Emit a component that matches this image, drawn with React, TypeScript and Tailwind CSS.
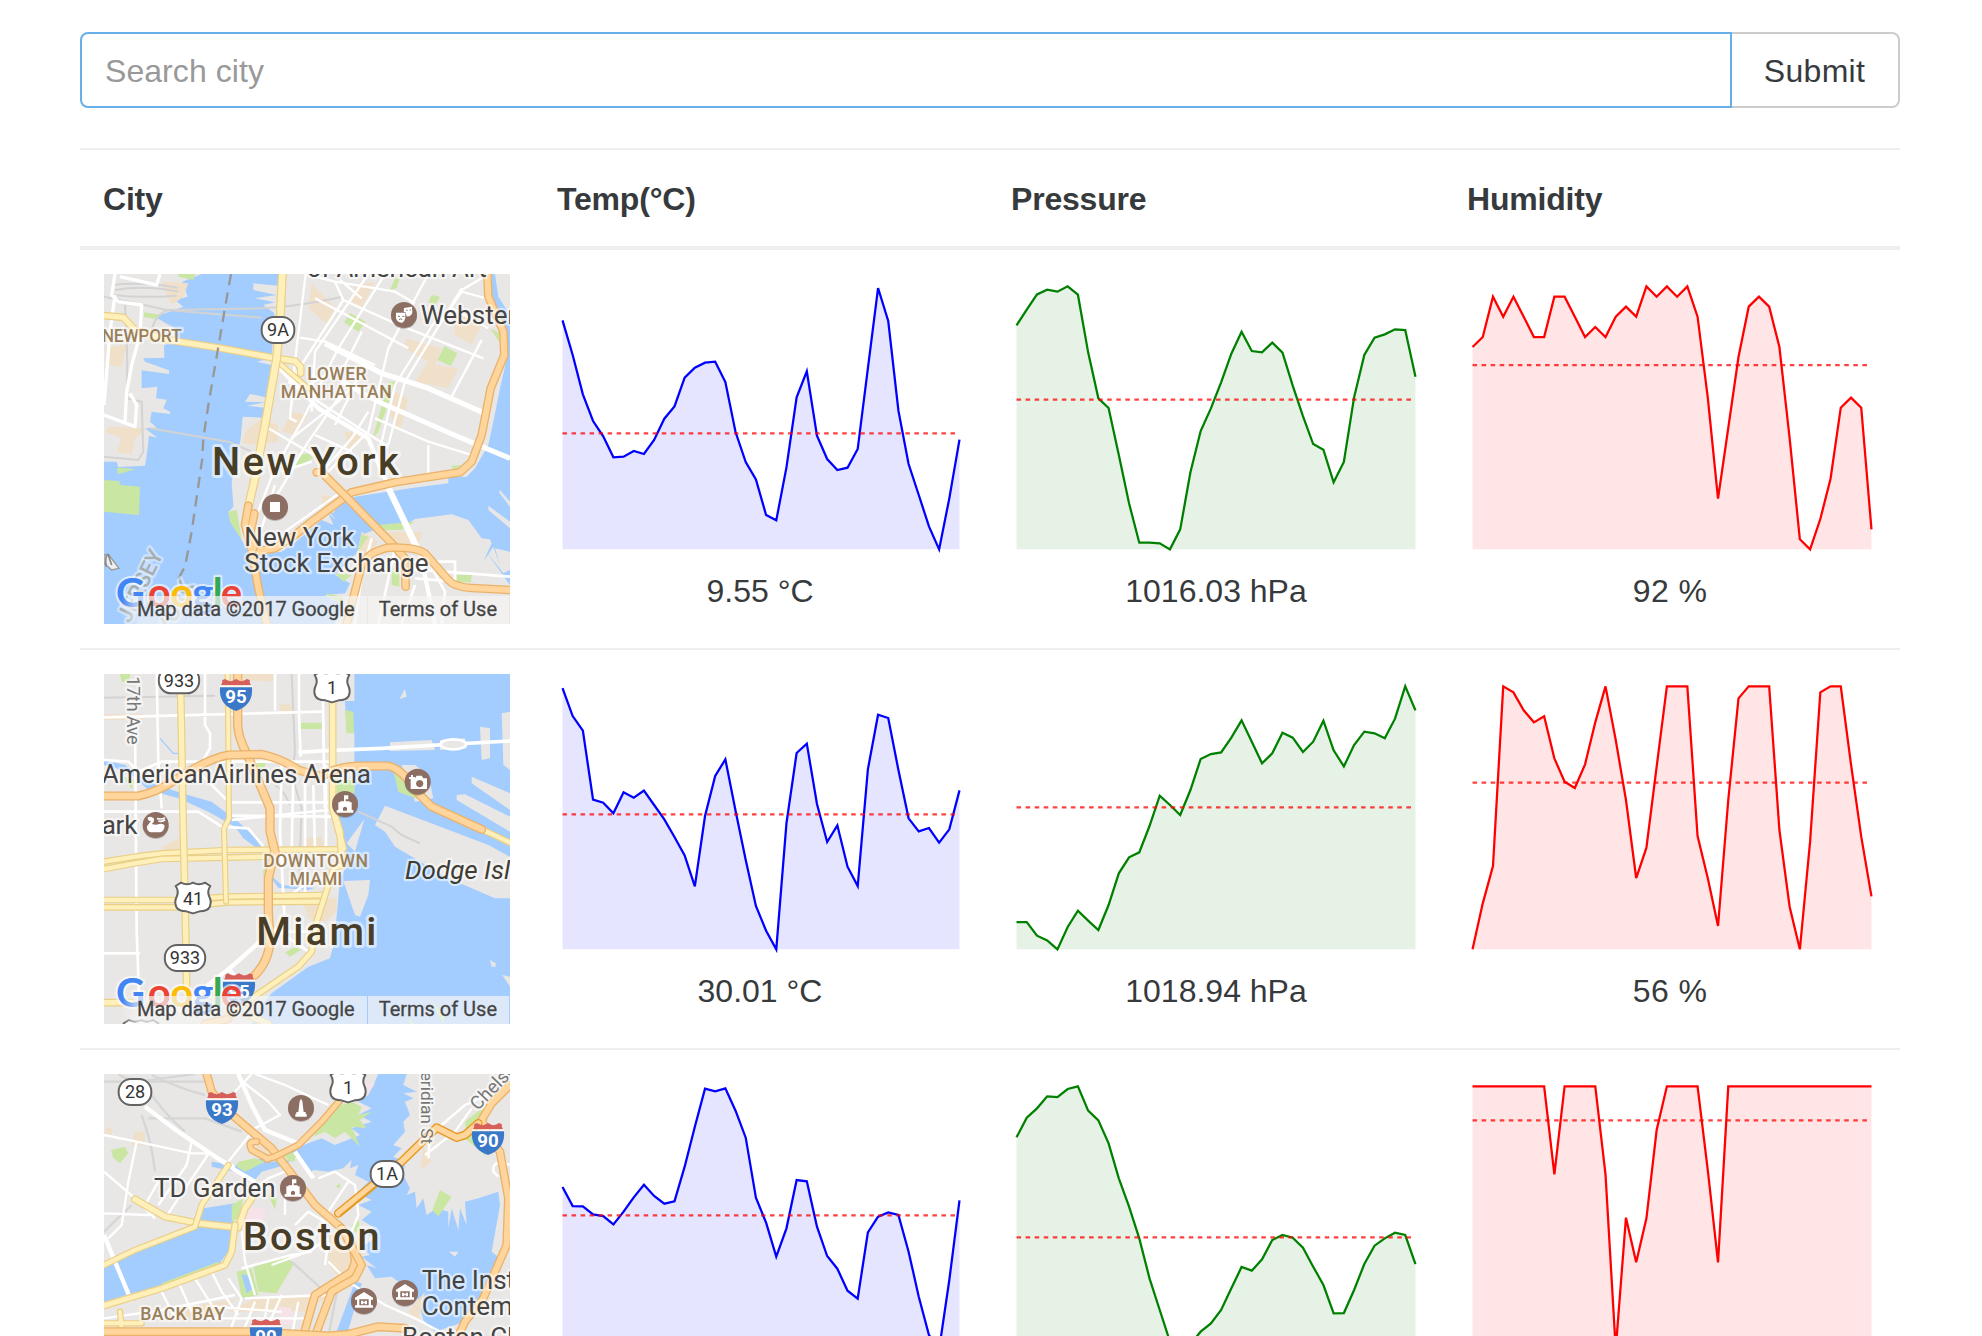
import React from "react";

/* ---------- sparkline chart ---------- */

type ChartProps = {
  values: number[];
  floor: number;
  mean: number;
  color: string;
  width: number;
};

const UNIT = 3;

function Chart({ values, floor, mean, color, width }: ChartProps) {
  const pad = width / 90;
  const base = 280 - 4.65;
  const step = (width - pad * 2) / (values.length - 1);
  const y = (v: number) => base - (floor - v) / UNIT;
  const points = values.map((v, i) => `${(pad + i * step).toFixed(2)},${y(v).toFixed(2)}`).join(" ");
  return (
    <svg width={width} height={280} className="block">
      <polygon points={`${pad},${base} ${points} ${width - pad},${base}`} fill={color} fillOpacity={0.1} />
      <polyline points={points} fill="none" stroke={color} strokeWidth={2.26} />
      <line
        x1={pad}
        x2={width - pad - 0.5}
        y1={y(mean)}
        y2={y(mean)}
        stroke="red"
        strokeOpacity={0.75}
        strokeWidth={2.26}
        strokeDasharray={`${pad} ${pad}`}
      />
    </svg>
  );
}

/* ---------- map building blocks ---------- */

const WATER = "#a3ccff";
const LAND = "#e9e7e5";
const PARK = "#cae6a3";
const BUILT = "#f0e0ca";

function Fill({ c, d }: { c: string; d: string }) {
  return <path d={d} fill={c} />;
}

function Line({ c = "#ffffff", w = 9, d, dash }: { c?: string; w?: number; d: string; dash?: string }) {
  return <path d={d} fill="none" stroke={c} strokeWidth={w} strokeLinejoin="round" strokeDasharray={dash} />;
}

function Arterial({ d, w = 18 }: { d: string; w?: number }) {
  return (
    <g fill="none" strokeLinejoin="round" strokeLinecap="round">
      <path d={d} stroke="#e9cf87" strokeWidth={w + 5} />
      <path d={d} stroke="#ffefb8" strokeWidth={w - 2} />
    </g>
  );
}

function Highway({ d, w = 19, edge = "#eab26a" }: { d: string; w?: number; edge?: string }) {
  return (
    <g fill="none" strokeLinejoin="round" strokeLinecap="round">
      <path d={d} stroke={edge} strokeWidth={w + 7} />
      <path d={d} stroke="#ffd59b" strokeWidth={w - 1} />
    </g>
  );
}

type LabelProps = {
  x: number;
  y: number;
  len?: number;
  size?: number;
  fill?: string;
  weight?: number;
  italic?: boolean;
  rotate?: number;
  halo?: number;
  children: React.ReactNode;
};

function Label({ x, y, len, size = 78, fill = "#444444", weight = 400, italic, rotate, halo = 14, children }: LabelProps) {
  return (
    <text
      x={x - 2}
      y={y}
      textLength={len}
      fontSize={size}
      fontWeight={weight}
      fontStyle={italic ? "italic" : undefined}
      fill={fill}
      stroke="#ffffff"
      strokeOpacity={0.55}
      strokeWidth={halo}
      strokeLinejoin="round"
      paintOrder="stroke"
      transform={rotate ? `rotate(${rotate} ${x} ${y})` : undefined}
    >
      {children}
    </text>
  );
}

function Area(props: LabelProps) {
  return <Label size={53} weight={500} fill="#997f5a" {...props} />;
}

function CityName(props: LabelProps) {
  return <Label size={119} weight={500} fill="#483d26" halo={18} {...props} />;
}

function StateRoute({ x, y, w = 98, children }: { x: number; y: number; w?: number; children: string }) {
  return (
    <g>
      <rect x={x - w / 2} y={y - 39} width={w} height={78} rx={37} fill="#fff" stroke="#636363" strokeWidth={6} />
      <text x={x} y={y + 19} textAnchor="middle" fontSize={54} fill="#333">
        {children}
      </text>
    </g>
  );
}

function UsRoute({ x, y, children }: { x: number; y: number; children: string }) {
  return (
    <g transform={`translate(${x} ${y})`}>
      <path
        d="M-52 13L-36 3Q-18 13 0 3Q18 13 36 3L52 13Q42 28 48 43Q57 60 50 76Q44 88 20 89L0 95L-20 89Q-44 88 -50 76Q-57 60 -48 43Q-42 28 -52 13Z"
        fill="#fff"
        stroke="#636363"
        strokeWidth={6}
        strokeLinejoin="round"
      />
      <text y={70} textAnchor="middle" fontSize={54} fill="#333">
        {children}
      </text>
    </g>
  );
}

function Interstate({ x, y, children }: { x: number; y: number; children: string }) {
  return (
    <g transform={`translate(${x} ${y})`}>
      <path d="M-45 19Q-39 8 -42 4L-33 0Q-22 8 -12 6L0 0L12 6Q22 8 33 0L42 4Q39 8 45 19Z" fill="#d65f5b" />
      <path d="M-48 19H48V26H-48Z" fill="#fff" fillOpacity={0.85} />
      <path d="M-48 25H48Q52 72 12 91L0 96L-12 91Q-52 72 -48 25Z" fill="#3a78c9" />
      <text y={73} textAnchor="middle" fontSize={56} fontWeight={700} fill="#fff">
        {children}
      </text>
    </g>
  );
}

function Poi({ x, y, children }: { x: number; y: number; children: React.ReactNode }) {
  return (
    <g transform={`translate(${x} ${y})`}>
      <circle r={39} cy={3} fill="#000" fillOpacity={0.2} />
      <circle r={39} fill="#8d6e63" />
      {children}
    </g>
  );
}

const arenaIcon = (
  <path
    fill="#fff"
    fillRule="evenodd"
    d="M-3 -26H10V-14H2V-8H14V2H20V18H25V26H-25V18H-20V2H-14V-8H-3ZM-20 -5H-14V2H-20ZM14 -5H20V2H14ZM-6 20H6V12Q0 4 -6 12Z"
  />
);

const museumIcon = (
  <path
    fill="#fff"
    fillRule="evenodd"
    d="M0 -27L27 -10V-4H21V13H27V20H-27V13H-21V-4H-27V-10ZM-14 -5V13H14V-5ZM-9 -1H-2V3H2V-1H9V10H2V6H-2V10H-9Z"
  />
);

function GoogleMark() {
  const letters: [string, number, string][] = [
    ["G", 63, "#4285f4"],
    ["o", 158, "#ea4335"],
    ["o", 226, "#fbbc05"],
    ["g", 292, "#4285f4"],
    ["l", 353, "#34a853"],
    ["e", 377, "#ea4335"],
  ];
  return (
    <g
      fontSize={120}
      fontWeight={700}
      stroke="#ffffff"
      strokeOpacity={0.6}
      strokeWidth={13}
      strokeLinejoin="round"
      paintOrder="stroke"
      style={{ fontFamily: "Lato, sans-serif" }}
    >
      {letters.map(([ch, x, c], i) => (
        <text key={i} x={x} y={1027} fill={c}>
          {ch}
        </text>
      ))}
    </g>
  );
}

function MapFrame({ land, children }: { land: string; children: React.ReactNode }) {
  return (
    <svg
      width={406}
      height={350}
      viewBox="27 27 1218 1050"
      className="block"
      style={{ fontFamily: "Roboto, sans-serif" }}
    >
      <defs>
        <linearGradient id="credit" x1="0" x2="1">
          <stop offset="0" stopColor="#f5f5f5" stopOpacity="0" />
          <stop offset="0.07" stopColor="#f5f5f5" stopOpacity="0.7" />
          <stop offset="1" stopColor="#f5f5f5" stopOpacity="0.7" />
        </linearGradient>
      </defs>
      <rect x={27} y={27} width={1218} height={1050} fill={land} />
      {children}
      <GoogleMark />
      <rect x={80} y={993} width={736} height={84} fill="url(#credit)" />
      <rect x={819} y={993} width={423} height={84} fill="#f5f5f5" fillOpacity={0.7} />
      <g fontSize={60} fill="#444" stroke="#444" strokeWidth={0.8}>
        <text x={126} y={1052} textLength={653}>
          Map data ©2017 Google
        </text>
        <text x={851} y={1052} textLength={355}>
          Terms of Use
        </text>
      </g>
    </svg>
  );
}

/* ---------- maps ---------- */

function NewYorkMap() {
  return (
    <MapFrame land={WATER}>
      <Fill
        c={LAND}
        d="M27 27H320L262 50L278 95L240 105L265 125L180 155L205 170L240 190L235 235L207 240L208 278L145 280L150 290L222 316V327L140 316V370L187 365L183 400L215 404L205 430L225 440V447L170 440L165 470L185 488L150 490L187 518L162 512L158 550L150 602L70 606L65 590H27Z"
      />
      <Fill
        c={LAND}
        d="M560 27H1180L1190 120L1225 210L1238 270L1215 370L1195 470L1180 540L1140 610L1115 635H1060V655L945 670L780 695L700 735L722 765L700 745L715 780L680 765L640 800L590 840L560 860L500 868L455 850L440 825L405 760L400 742L415 725L410 650L430 560L437 520L443 455L505 458L508 428L457 422L512 412L450 410L465 387L518 398L530 300L485 290L530 280L538 145L505 120L540 112L480 100L545 90L475 75V55L550 62Z"
      />
      <Fill c={LAND} d="M1200 27H1245V150L1210 95Z" />
      <Fill
        c={LAND}
        d="M1245 830L1160 820L1120 765L1070 748L960 762L940 775L850 790L800 810L785 865L720 930L765 955L750 985L690 990L742 1020L720 1077H1245V960L1170 855L1225 925L1245 915Z"
      />
      <Fill c={WATER} d="M1200 790L1245 800V860L1200 850L1215 900L1195 845L1165 890L1190 835L1175 800Z" />
      <Fill c={LAND} d="M1215 675L1245 710V725L1212 682ZM1180 722L1245 770V790L1180 735Z" />
      <Fill
        c={BUILT}
        d="M32 245L95 240L80 305L35 300ZM40 485L155 490L120 520L110 570L65 560L80 520L30 500ZM205 50L280 55L265 95L230 120L200 60ZM450 500L500 460L550 480V530L480 540L445 535ZM650 55L720 130L700 180L640 130ZM780 60L840 50L800 130L770 110ZM930 220L1040 250L1020 300L1090 310L1060 370L960 350L1000 290L930 250ZM1070 130L1160 180L1130 240L1080 210ZM590 440L640 450L600 510L560 500ZM750 500L820 510L760 560ZM900 380L940 400L915 500L885 450ZM680 690L740 700L715 745L680 720ZM850 800L980 800L970 850H880ZM800 800L850 830L800 890L790 850Z"
      />
      <Fill
        c={PARK}
        d="M250 27H300L295 45L250 35ZM147 142L200 150L185 162L147 156ZM27 645L73 648L75 660L135 665L132 750L27 740ZM66 608L120 612L70 628ZM765 143L812 170L790 200L747 172ZM1048 243L1087 265L1068 303L1027 285ZM1010 90L1035 95L1020 120L1000 112ZM880 350H903L850 500L833 520ZM600 608L615 570L640 565L655 580ZM400 740L425 735L440 825L405 770ZM845 780L960 770L920 795L845 795ZM890 920H913V965L890 960ZM1085 930H1130L1128 952H1085ZM800 810L820 815L785 865ZM720 925L770 930L745 950ZM690 985L745 995L740 1020ZM900 40H915L905 70L885 75ZM1070 602L1100 600L1075 620ZM1185 190L1215 205L1212 230Z"
      />
      <Line c="#d3d3d3" w={6} d="M27 95Q150 120 215 135L500 158M215 135L500 130Q640 120 740 95M165 490L400 530L470 560M60 75Q150 60 250 80M50 60Q150 50 248 68M55 90Q140 100 245 92M90 120Q100 280 95 400L140 410L145 560L130 585L27 575M220 135Q170 150 165 230" />
      <g>
        <Line w={10} d="M60 27L50 90L70 110L140 120L135 210L110 300L95 380L90 470M27 450L120 485L125 420L105 385M60 90L45 200L27 420M75 35L185 60L195 27" />
        <Line w={7} d="M632 27L600 290L585 460L605 470M720 50L745 105L600 330L590 420M820 27L660 260L650 440M870 27L730 250L620 470L540 610L470 790M1000 27L880 250L820 500L700 620M1050 120L900 360L860 530M1100 70L930 350L880 540M1160 225L1070 395M1190 105L1100 80L1060 140M640 30L720 50L900 80L960 115M660 100L940 250M745 105L900 175L1165 280M1180 190L1070 130M615 218L690 230L840 300M735 45L800 100M1160 40L1100 75M580 350L700 430L880 545M620 370L750 300L800 200" />
        <Line w={16} d="M690 235L860 325L1000 370L1170 445" />
        <Line w={13} d="M545 300L670 430L820 520L860 620L975 860L1020 1077" />
        <Line w={15} d="M740 350L850 410L1090 515L1245 580" />
        <Line w={7} d="M520 490L640 560L700 590M590 520L730 410L800 330M660 510L770 560M770 380L720 480M840 460L1000 530L1130 570M1000 540V630M740 385L640 530L590 610M820 440L770 520L690 610M570 800L740 680M560 620L650 590M540 700L600 600M500 790L540 660" />
        <Line w={8} d="M875 670L960 850M830 820L800 930L780 1077M890 890H1080V950L960 940M900 850L850 1077M920 910L1245 935M1000 890L1050 980L1040 1077M960 960L920 1077" />
      </g>
      <Arterial d="M27 152L85 157L120 195L220 225L380 250L543 280L600 288L617 305V325" />
      <Arterial d="M545 288L640 370" w={13} />
      <Arterial d="M562 27L556 150L545 280L510 480L480 640L460 725" w={22} />
      <Highway d="M1177 27L1180 95L1225 200L1228 270L1187 370L1160 510L1130 590L1095 622L900 652L770 682L650 770L600 810L540 850L480 860" />
      <Highway d="M460 722L450 780L470 855L490 970L515 1077M478 745L467 800L475 850" />
      <Highway d="M665 622L680 622L750 692L890 835L930 880L932 965" />
      <Highway d="M755 1077L800 900Q820 860 880 848Q960 845 990 865L1060 945Q1080 967 1130 969L1245 975" />
      <Line c="#989898" w={7} dash="34 22" d="M408 27L395 100L340 420L325 520L322 580L290 800L270 905L245 950L238 1000" />
      <Label x={637} y={36} len={540}>of American Art</Label>
      <Label x={979} y={178}>Webster</Label>
      <Area x={22} y={232} len={240}>NEWPORT</Area>
      <Area x={639} y={345} len={178}>LOWER</Area>
      <Area x={559} y={399} len={333}>MANHATTAN</Area>
      <g opacity={0.8}>
        <Label x={105} y={1075} size={66} weight={500} fill="#a8a89c" rotate={-64}>JERSEY</Label>
        <Label x={225} y={1110} size={66} weight={500} fill="#a8a89c" rotate={-64}>YORK</Label>
      </g>
      <CityName x={353} y={630} len={560}>New York</CityName>
      <Label x={450} y={842} len={330}>New York</Label>
      <Label x={450} y={920} len={553}>Stock Exchange</Label>
      <StateRoute x={549} y={195}>9A</StateRoute>
      <Poi x={927} y={150}>
        <path fill="#fff" d="M0 -21L24 -25L25 -7Q20 6 8 4L4 -9H-1Z" />
        <path fill="#fff" d="M-24 -7H4V8Q0 24 -9 23Q-23 20 -24 8Z" />
        <path d="M-18 4H-12M-5 4H1M-15 14Q-10 9 -5 14M7 -14H11M17 -15H21" fill="none" stroke="#8d6e63" strokeWidth={3} />
      </Poi>
      <Poi x={540} y={726}>
        <path fill="#fff" d="M-15 -15H15V15H-15Z" />
      </Poi>
      <path d="M27 870L40 868L72 910L50 915L27 895Z" fill="#eee" stroke="#999" strokeWidth={4} />
      <path d="M34 905Q28 870 40 870L50 900" fill="none" stroke="#888" strokeWidth={5} />
    </MapFrame>
  );
}

function MiamiMap() {
  return (
    <MapFrame land={LAND}>
      <Fill
        c={WATER}
        d="M778 27H1245V1077H470L500 1020L530 985L640 905L705 880L718 830L730 700L735 640L757 600L745 500L720 450L778 380V200L755 195L750 108H778Z"
      />
      <Fill c={WATER} d="M27 285L90 300L160 350L260 385L350 410L430 470L510 545H480L445 520L420 485L340 440L250 400L160 375L100 320L27 300ZM515 620L560 660L660 668L640 675L550 668Z" />
      <Line c={WATER} w={4} d="M195 220L235 265H250" />
      <Fill
        c={LAND}
        d="M870 422L1180 540L1245 575V700H1200L1060 640L900 545L870 500L840 480ZM920 300H960L1000 330L1015 400L960 410ZM1130 335L1245 385V435L1130 355ZM1085 390L1110 388L1245 455V500L1085 405ZM885 232L1010 225L1020 255L885 258ZM1035 225L1110 220L1115 250L1035 255ZM1155 185L1185 190V280L1160 285ZM1220 145L1245 140V315L1225 300ZM930 72L935 95L913 102ZM745 648L825 645L820 690L795 755L780 750ZM808 462L780 560L755 535ZM1185 885L1202 895V905H1190ZM1222 930L1245 935V965Z"
      />
      <Fill c={PARK} d="M750 135L775 140L777 205H755ZM617 173H680V192H617ZM895 318L925 330L975 405L910 380ZM75 27H107L100 50H80ZM570 862L600 845L618 855L585 875ZM480 285H510V310H480ZM725 345H778V385H725ZM85 335L118 345L110 372ZM505 610H522V635H505ZM940 1060L960 1077H945ZM1005 1005L1050 1050L1045 1077Z" />
      <Fill c={BUILT} d="M440 27H535V50L450 45ZM555 118H590V145H555ZM27 148H145V165H27ZM200 545L250 520H270V560H210ZM625 520L680 515L690 560H630ZM620 700H725V740L690 770L640 760ZM510 530H550V600H520ZM620 830L690 790L680 850Z" />
      <Line c="#d3d3d3" w={6} d="M790 440L890 485L920 510L975 535M27 98L360 92M590 27L600 260M600 260L590 330L620 430L610 700M540 360Q570 380 585 420" />
      <Line w={8} d="M185 27L190 290L200 430M120 160L125 800L135 1077M27 285L100 290L130 320L200 290H710M27 440H310L380 485L460 490L505 545M330 27V180L345 205V250L310 310M27 157L680 140M540 27V137M612 27V150L617 275M683 27L686 260L690 430M27 865H135M410 412H700M410 465L700 435M410 452L715 455M560 300L555 500L568 750M595 340L590 550M630 350V700M655 360L660 560M693 300V545M575 700L640 650M310 320L400 410M530 800H640M540 790L640 860" />
      <Line w={13} d="M495 830L410 905L340 960L250 1040M400 910L440 960" />
      <Line w={11} d="M610 262L690 257L860 250L1060 238L1245 228" />
      <ellipse cx={1075} cy={238} rx={38} ry={15} fill={LAND} stroke="#fff" strokeWidth={8} />
      <Arterial d="M27 590L120 575L200 565L400 555L740 553" w={15} />
      <Arterial d="M27 612L120 595L200 582L400 578L520 575" w={15} />
      <Arterial d="M27 705H240L400 695L690 690" w={15} />
      <Arterial d="M27 727H240L400 712L680 710" w={15} />
      <Arterial d="M257 80L265 500L270 700L275 960" />
      <Arterial d="M398 27L402 460L387 490L393 710" w={13} />
      <Arterial d="M713 60V430L735 500L742 600M713 430L745 550" />
      <Arterial d="M742 600L715 610L700 660L665 770L650 860L610 905L470 1000L400 1050" w={16} />
      <Arterial d="M27 1013H110" />
      <Arterial d="M470 1055L520 1077" />
      <Arterial d="M1165 495L1245 533" w={15} />
      <Highway d="M428 27V180Q430 220 455 265Q500 370 525 430V500L540 560L520 640V740L525 830Q520 890 480 930" w={21} />
      <Highway d="M27 393H130Q190 380 240 345Q340 280 400 270L500 268Q560 280 610 315L680 335Q720 305 790 303H880Q920 310 965 380L1010 425L1160 493" w={20} />
      <Highway d="M400 1062L330 1077" />
      <Label x={97} y={36} size={54} fill="#777" rotate={90} len={205}>17th Ave</Label>
      <Label x={22} y={353} len={808}>AmericanAirlines Arena</Label>
      <Label x={22} y={507} len={107}>ark</Label>
      <Area x={507} y={606} len={314}>DOWNTOWN</Area>
      <Area x={586} y={661} len={158}>MIAMI</Area>
      <Label x={932} y={642} italic fill="#3f3c32">Dodge Isl</Label>
      <CityName x={486} y={840} len={360}>Miami</CityName>
      <StateRoute x={252} y={46} w={121}>933</StateRoute>
      <StateRoute x={270} y={879} w={121}>933</StateRoute>
      <UsRoute x={711} y={17}>1</UsRoute>
      <UsRoute x={294} y={650}>41</UsRoute>
      <UsRoute x={138} y={1062}>1</UsRoute>
      <Interstate x={423} y={42}>95</Interstate>
      <Interstate x={432} y={925}>95</Interstate>
      <Poi x={968} y={350}>
        <path fill="#fff" fillRule="evenodd" d="M-8 -10L-3 -18H12L17 -10H28V22H-21V-8ZM6 -5A11 11 0 1 0 6.1 -5Z" />
        <path fill="#fff" d="M-20 -20H-14V-14H-8V-8H-14V-2H-20V-8H-26V-14H-20Z" />
      </Poi>
      <Poi x={750} y={417}>{arenaIcon}</Poi>
      <Poi x={182} y={480}>
        <path fill="#fff" d="M-24 -22Q-15 -28 -6 -20Q-2 -10 -12 -3Q2 2 10 -3Q24 -5 27 2Q26 17 14 22H-15Q-28 18 -26 4L-14 -12Q-24 -12 -24 -22Z" />
        <path d="M8 -12Q22 -9 28 -16M4 -19Q20 -16 28 -22" fill="none" stroke="#fff" strokeWidth={5} />
      </Poi>
    </MapFrame>
  );
}

function BostonMap() {
  return (
    <MapFrame land={LAND}>
      <Fill
        c={WATER}
        d="M850 27H935L925 60L965 80L925 85L955 100L930 110L945 150L925 170L930 200L895 240L920 250L895 275L930 290L925 330L945 370L935 390L960 380L965 430L985 400L995 450L1025 430L1060 440L1060 490L1070 430L1090 495L1095 430L1115 480L1110 410L1150 400L1210 380L1215 420L1190 560L1215 580L1190 640L1130 760L1080 780L1020 800L985 765L965 690L890 635L840 640L815 600L845 610L800 575L825 570L800 545L840 520L800 500L840 490L800 465L830 440L790 420L830 405L785 385L820 350L780 330L790 300L765 310L770 285L745 310L700 320L655 315L640 330L610 270L570 300L500 320L480 345L420 320L350 305V290L420 300L470 290L530 270L600 250L680 220L720 240L795 210L770 190L830 170L790 150L830 130L790 110L820 90L835 60Z"
      />
      <Fill c={WATER} d="M27 605L200 530L310 480L325 430L420 415L415 470L400 560L370 600L200 660L27 710ZM780 650L800 655L755 813H720ZM440 625L460 640L475 670L455 685Z" />
      <Fill c={LAND} d="M1090 560L1080 575L1062 560Z" />
      <Fill
        c={PARK}
        d="M690 150L720 125L770 110L800 125L790 150L830 140L795 165L815 190L770 185L795 245L750 200L720 220L690 200L655 215ZM475 605L580 575L595 600L545 685L490 680ZM425 620L470 610L490 690L440 700ZM410 420L445 400L430 460L410 470ZM430 290L480 280L510 290L450 320L425 305ZM540 275L600 262L600 290L560 285ZM48 255L90 245L100 265L75 295L55 280ZM1035 375L1070 395L1030 455L1012 435ZM1110 170L1160 130L1180 180L1200 250L1170 270L1115 225ZM770 480L790 465L795 490L780 505ZM200 655L370 590L375 600L200 675ZM520 390L545 400L540 435ZM70 755L80 790H65ZM720 365L735 355V370Z"
      />
      <Fill c={WATER} d="M440 628L460 632L475 670L455 685Z" />
      <Fill c={BUILT} d="M700 510L790 520L790 620L740 650L700 600ZM985 240L1010 290L975 315ZM480 700L700 690L640 740H400ZM940 740L990 680L970 770ZM460 225L540 250L580 285L530 290ZM230 735L430 700L340 760H220ZM120 200H150V240H110ZM30 190L50 185V210H30ZM1000 200L1020 240H985Z" />
      <Fill c="#f6e3ea" d="M460 425L510 430V465L450 475ZM550 725L590 730V780H560ZM800 60L840 55L820 85Z" />
      <Line c="#d6d6d6" w={7} d="M27 50H330M170 30Q250 70 330 90M140 150Q170 230 180 320M150 60Q200 140 270 200M160 160H330L440 200M70 27Q110 60 200 40L300 27M590 590L700 690M730 660L700 813M27 500L110 420" />
      <Line w={7} d="M27 210L150 235L290 265L345 265L420 305M345 260L210 460M27 320L120 400L180 460M125 230L100 350L80 480L40 520M190 350L150 420M290 230L275 300L190 420M27 445L160 450L200 440M480 27L570 60L700 120M430 40L520 110L555 150L480 190L400 290M470 27L420 80M670 340L720 320L780 360L790 450L770 500M700 440L760 350M570 450V400L600 360M600 480L640 440L690 470M480 370L520 340L570 320M530 600L640 560L700 520M440 500L450 590L480 690M440 610L590 570L650 560M700 590L760 650L870 720L960 760L1060 813M700 530L690 600M450 700L700 690M400 640L440 700L400 813M350 620L380 680L430 750M300 640L350 720M200 680L240 760M250 650L290 740M27 760L200 735L420 690M480 710L440 813M520 700L500 813M560 690L520 780M340 760H650M350 725L560 740M610 710L590 813M990 270L1080 200L1130 130M1000 280L1005 210L1110 120L1180 90M1245 300Q1190 280 1195 320L1210 335" />
      <Line w={13} d="M150 125L250 200L420 315L480 350M430 27L470 120L510 195L620 240M600 260L655 340M27 510L60 590L110 710" />
      <Arterial d="M120 403L210 455L310 475L430 488L450 430L470 400" />
      <Arterial d="M27 600L120 555L300 485L320 420L400 300" w={15} />
      <Arterial d="M27 722L200 670L390 600L410 560L420 480" w={17} />
      <Arterial d="M27 775H140M75 740L80 790" w={14} />
      <Highway d="M335 27L350 80L400 140L530 250L600 340L660 420L740 490Q780 540 780 590L770 620L660 690L625 813" />
      <Highway d="M740 490L800 600L780 640L710 680L660 813" />
      <Highway d="M740 100L680 170L610 240L540 275L515 282M485 230Q455 228 470 255L520 282" w={15} />
      <Highway d="M27 800H470L700 813L760 808L850 785L930 790" w={20} />
      <Highway d="M1245 60L1190 115L1160 165L1180 210L1215 260L1240 400L1235 540L1165 700L1110 770L1090 813" />
      <Highway d="M730 445L920 290L1025 188L1085 218L1110 210L1150 175" edge="#e5991f" />
      <Line c="#e5991f" w={4} d="M735 452L850 358" />
      <Label x={978} y={22} size={52} fill="#777" rotate={90}>eridian St</Label>
      <Label x={1150} y={137} size={56} fill="#777" rotate={-46}>Chelsea</Label>
      <Label x={179} y={395} len={365}>TD Garden</Label>
      <CityName x={445} y={555} len={411}>Boston</CityName>
      <Area x={138} y={765} len={254}>BACK BAY</Area>
      <Label x={982} y={671}>The Institute</Label>
      <Label x={982} y={749}>Contemporary</Label>
      <Label x={923} y={844}>Boston Children</Label>
      <StateRoute x={120} y={81}>28</StateRoute>
      <StateRoute x={876} y={327}>1A</StateRoute>
      <UsRoute x={759} y={17}>1</UsRoute>
      <Interstate x={381} y={81}>93</Interstate>
      <Interstate x={1179} y={174}>90</Interstate>
      <Interstate x={513} y={762}>90</Interstate>
      <Poi x={618} y={129}>
        <path fill="#fff" d="M-4 -20L0 -28L4 -20L8 12H14V18H17V26H-17V18H-14V12H-8Z" />
      </Poi>
      <Poi x={594} y={369}>{arenaIcon}</Poi>
      <Poi x={930} y={684}>{museumIcon}</Poi>
      <Poi x={807} y={708}>{museumIcon}</Poi>
    </MapFrame>
  );
}

/* ---------- data ---------- */

type Series = { values: number[]; mean: number; text: string };
type City = { name: string; floor: number; map: React.ReactNode; temp: Series; pressure: Series; humidity: Series };

const cities: City[] = [
  {
    name: "New York",
    floor: 853,
    map: <NewYorkMap />,
    temp: {
      values: [166, 270, 388, 468, 514, 577, 575, 558, 567, 525, 461, 424, 338, 308, 293, 290, 351, 501, 591, 643, 750, 766, 607, 397, 319, 512, 582, 615, 608, 552, 310, 69, 168, 437, 597, 690, 784, 853, 700, 524],
      mean: 505,
      text: "9.55 °C",
    },
    pressure: {
      values: [181, 134, 88, 74, 80, 64, 89, 262, 400, 429, 570, 715, 833, 833, 835, 853, 793, 622, 498, 430, 352, 266, 200, 258, 262, 233, 263, 362, 453, 537, 554, 652, 591, 397, 270, 218, 208, 193, 195, 335],
      mean: 404,
      text: "1016.03 hPa",
    },
    humidity: {
      values: [246, 216, 95, 155, 95, 155, 216, 216, 95, 95, 155, 216, 186, 216, 155, 125, 155, 64, 95, 64, 95, 64, 155, 398, 701, 489, 276, 125, 95, 125, 246, 519, 823, 853, 762, 641, 428, 398, 428, 793],
      mean: 300,
      text: "92 %",
    },
  },
  {
    name: "Miami",
    floor: 838,
    map: <MiamiMap />,
    temp: {
      values: [54, 138, 182, 389, 398, 430, 367, 383, 362, 405, 448, 501, 556, 649, 438, 318, 268, 422, 570, 708, 782, 838, 460, 249, 221, 402, 516, 466, 590, 648, 298, 134, 144, 300, 445, 484, 474, 518, 478, 361],
      mean: 433,
      text: "30.01 °C",
    },
    pressure: {
      values: [756, 756, 797, 811, 838, 771, 722, 752, 780, 705, 610, 562, 547, 468, 377, 405, 435, 360, 267, 252, 247, 203, 151, 215, 280, 250, 188, 203, 246, 215, 152, 241, 289, 225, 185, 190, 205, 146, 49, 121],
      mean: 412,
      text: "1018.94 hPa",
    },
    humidity: {
      values: [838, 700, 588, 49, 67, 121, 157, 139, 265, 335, 354, 283, 157, 49, 210, 390, 624, 533, 290, 49, 49, 49, 498, 625, 768, 390, 85, 49, 49, 49, 480, 710, 838, 515, 67, 49, 49, 283, 500, 679],
      mean: 338,
      text: "56 %",
    },
  },
  {
    name: "Boston",
    floor: 838,
    map: <BostonMap />,
    temp: {
      values: [351, 408, 409, 433, 438, 463, 425, 382, 344, 378, 401, 394, 290, 170, 56, 64, 55, 122, 203, 383, 458, 560, 475, 330, 334, 470, 558, 596, 662, 686, 487, 440, 427, 435, 545, 680, 795, 838, 630, 391],
      mean: 436,
      text: "5.92 °C",
    },
    pressure: {
      values: [202, 143, 115, 79, 81, 57, 49, 122, 151, 220, 325, 410, 505, 625, 720, 815, 838, 822, 785, 760, 720, 655, 591, 602, 568, 510, 495, 503, 533, 590, 645, 730, 729, 660, 582, 527, 505, 488, 495, 582],
      mean: 502,
      text: "1021.37 hPa",
    },
    humidity: {
      values: [49, 49, 49, 49, 49, 49, 49, 49, 313, 49, 49, 49, 49, 313, 838, 443, 577, 445, 180, 49, 49, 49, 49, 300, 577, 49, 49, 49, 49, 49, 49, 49, 49, 49, 49, 49, 49, 49, 49, 49],
      mean: 151,
      text: "97 %",
    },
  },
];

type MetricProps = { series: Series; floor: number; color: string; width: number; textClass?: string };

function Metric({ series, floor, color, width, textClass = "" }: MetricProps) {
  return (
    <div className="px-6 pt-6">
      <Chart values={series.values} mean={series.mean} floor={floor} color={color} width={width} />
      <div className={`mt-[13px] text-center leading-[48px] ${textClass}`}>{series.text}</div>
    </div>
  );
}

export default function App() {
  return (
    <div className="h-screen overflow-hidden bg-white px-20 pt-8 font-['Helvetica_Neue','Liberation_Sans',Arial,sans-serif] text-[32px] text-[#373a3c]">
      <div className="w-[1820px]">
        <form className="flex h-[76px]" onSubmit={(e) => e.preventDefault()}>
          <input
            className="w-[1652px] rounded-l-lg border-2 border-[#66afe9] px-[23px] pt-[2px] tracking-[0.06px] placeholder:text-[#999] focus:outline-none"
            placeholder="Search city"
          />
          <button className="flex-1 rounded-r-lg border-2 border-l-0 border-[#ccc] bg-white pt-[2px] pr-[1px] text-center tracking-[0.3px]">
            Submit
          </button>
        </form>

        <div className="mt-10 grid h-[102px] grid-cols-[454px_454px_456px_456px] border-t-2 border-b-4 border-[#eceeef] font-bold leading-[48px] tracking-[-0.2px]">
          {["City", "Temp(°C)", "Pressure", "Humidity"].map((h) => (
            <div key={h} className="pt-[25px] pr-6 pl-[23px]">
              {h}
            </div>
          ))}
        </div>

        {cities.map((c) => (
          <div
            key={c.name}
            className="grid h-[400px] grid-cols-[454px_454px_456px_456px] border-b-2 border-[#eceeef]"
          >
            <div className="p-6">{c.map}</div>
            <Metric series={c.temp} floor={c.floor} color="blue" width={406} textClass="pr-[2px]" />
            <Metric series={c.pressure} floor={c.floor} color="green" width={408} />
            <Metric series={c.humidity} floor={c.floor} color="red" width={408} textClass="pr-[4px] tracking-[0.4px]" />
          </div>
        ))}
      </div>
    </div>
  );
}
